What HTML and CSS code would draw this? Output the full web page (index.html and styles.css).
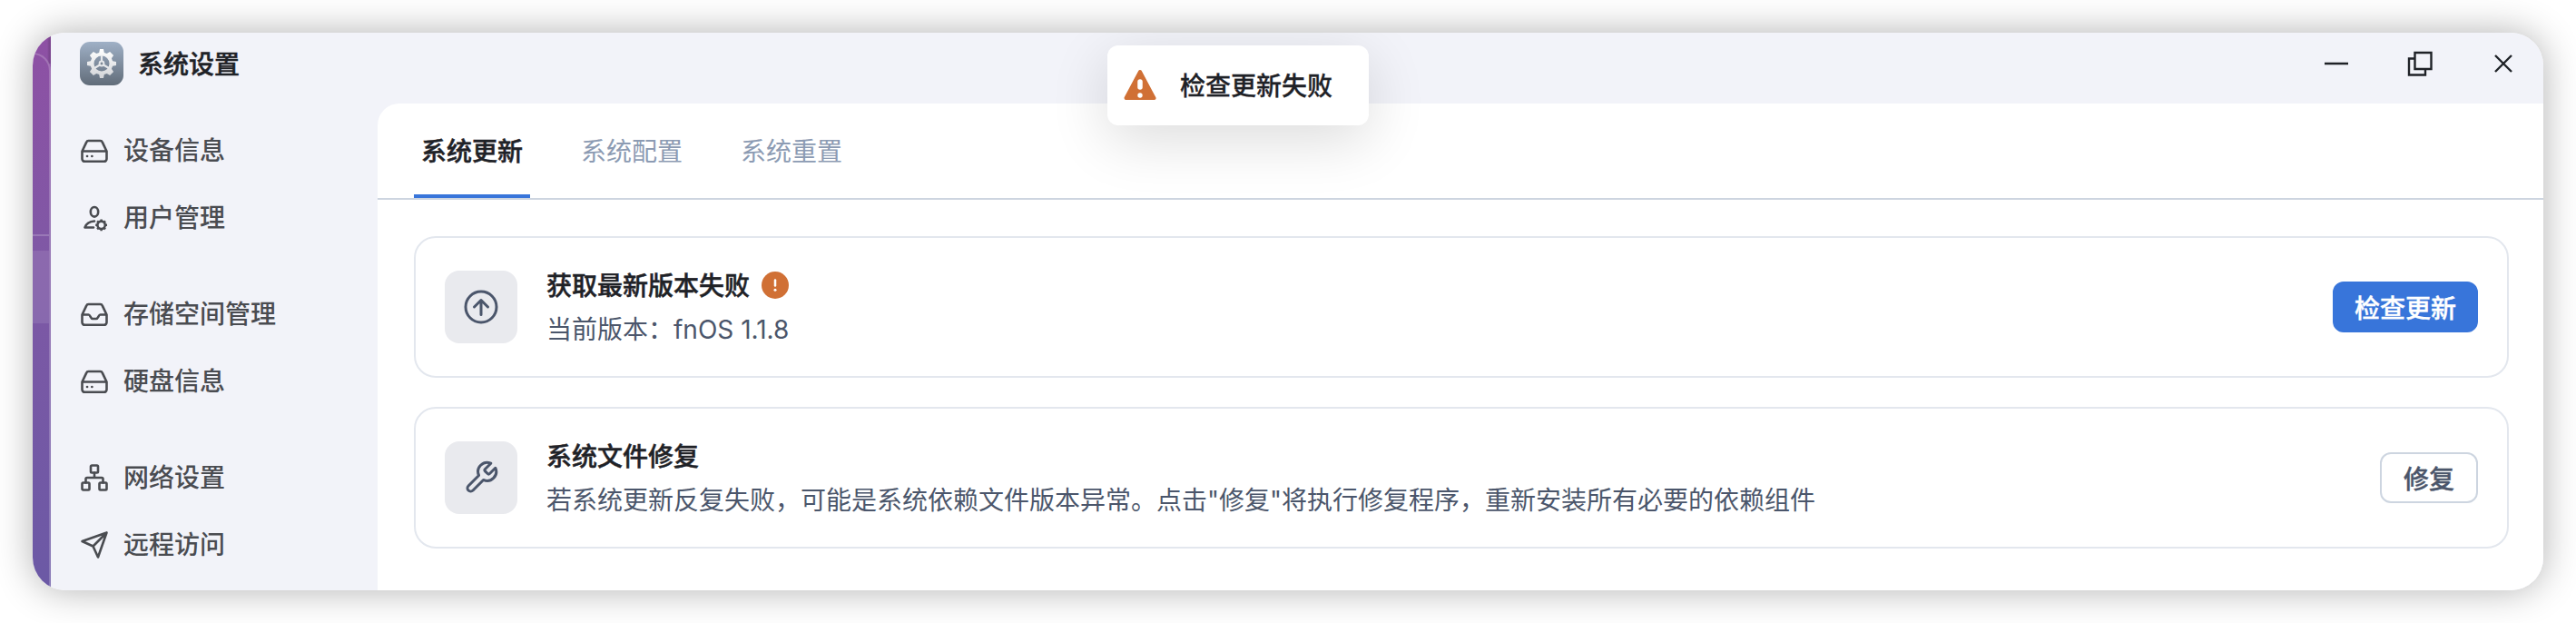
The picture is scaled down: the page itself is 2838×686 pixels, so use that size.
FILE: index.html
```html
<!DOCTYPE html>
<html lang="zh-CN">
<head>
    <meta charset="UTF-8">
    <meta name="viewport" content="width=device-width, initial-scale=1.0">
    <title>系统设置</title>
    <link rel="stylesheet" href="styles.css">
</head>
<body>
    <div class="window">
        <!-- Strip of the desktop left of the app -->
        <div class="desktop">
            <div class="desktop-panel">
                <div class="desktop-head"></div>
                <div class="desktop-row"></div>
            </div>
        </div>

        <div class="app">
            <!-- Title bar -->
            <div class="titlebar">
                <svg class="app-icon" viewBox="0 0 48 48">
                    <defs>
                        <linearGradient id="tile" x1="0" y1="0" x2="0" y2="1">
                            <stop offset="0" stop-color="#9fb0c6"/>
                            <stop offset="1" stop-color="#616c79"/>
                        </linearGradient>
                        <linearGradient id="gear" x1="0" y1="0" x2="0" y2="1">
                            <stop offset="0" stop-color="#ffffff"/>
                            <stop offset="1" stop-color="#d2d4d8"/>
                        </linearGradient>
                    </defs>
                    <rect width="48" height="48" rx="11" fill="url(#tile)"/>
                    <path fill="url(#gear)" fill-rule="evenodd" d="M22 8h4l.8 3.9 2.9 1.2 3.4-2.2 4 4-2.2 3.4 1.2 2.9 3.9.8v4l-3.9.8-1.2 2.9 2.2 3.4-4 4-3.4-2.2-2.9 1.2L26 40h-4l-.8-3.900-2.900-1.200-3.400 2.200-4-4 2.200-3.400-1.200-2.900L8 26v-4l3.900-.8 1.200-2.900-2.200-3.400 4-4 3.400 2.200 2.900-1.200zM24 15.500a8.500 8.500 0 1 0 0 17a8.500 8.500 0 1 0 0-17z"/>
                    <path stroke="#e6e8eb" stroke-width="2.200" fill="none" d="M24 15v7M22 25.500l-6 3.500M26 25.500l6 3.500"/>
                    <circle cx="24" cy="24" r="2.400" stroke="#e6e8eb" stroke-width="2" fill="#7c8896"/>
                </svg>
                <span class="app-name">系统设置</span>
                <div class="controls">
                    <svg viewBox="0 0 32 32"><path d="M3 16h26"/></svg>
                    <svg viewBox="0 0 32 32"><path d="M10.500 4h18v18h-18zM10.500 10.500H4v18h18V22"/></svg>
                    <svg viewBox="0 0 32 32"><path d="M7 7l18 18M25 7L7 25"/></svg>
                </div>
            </div>

            <div class="body">
                <!-- Sidebar -->
                <div class="sidebar">
                    <div class="group">
                        <a class="item">
                            <svg viewBox="0 0 32 32"><path d="M2.500 16.500 7.200 6.600A2.500 2.500 0 0 1 9.500 5h13a2.500 2.500 0 0 1 2.300 1.600l4.700 9.900V25a2.800 2.800 0 0 1-2.800 2.800H5.300A2.800 2.800 0 0 1 2.500 25zM2.500 16.500h27"/><path d="M8 22h.1M13.300 22h.1"/></svg>
                            设备信息
                        </a>
                        <a class="item">
                            <svg viewBox="0 0 32 32"><ellipse cx="16" cy="9.300" rx="4.200" ry="5.300"/><path d="M16 19.500c-6 .3-9 2.800-10.500 7H15"/><circle cx="23.600" cy="23.800" r="4.200"/><path stroke-width="2.400" stroke-linecap="butt" d="M23.600 17.400v2.200M23.600 28v2.200M17.200 23.800h2.200M27.800 23.800H30M19.100 19.300l1.500 1.500M26.600 26.800l1.500 1.500M28.100 19.300l-1.500 1.500M20.600 26.800l-1.500 1.500"/></svg>
                            用户管理
                        </a>
                    </div>
                    <div class="group">
                        <a class="item">
                            <svg viewBox="0 0 32 32"><path d="M2.500 16.500 7.200 6.600A2.500 2.500 0 0 1 9.500 5h13a2.500 2.500 0 0 1 2.300 1.600l4.700 9.900V25a2.800 2.800 0 0 1-2.800 2.800H5.300A2.800 2.800 0 0 1 2.500 25zM2.500 16.500h7c2 0 2.200 4.500 4.500 4.500h4c2.300 0 2.500-4.500 4.500-4.500h7"/></svg>
                            存储空间管理
                        </a>
                        <a class="item">
                            <svg viewBox="0 0 32 32"><path d="M2.500 16.500 7.200 6.600A2.500 2.500 0 0 1 9.500 5h13a2.500 2.500 0 0 1 2.300 1.600l4.700 9.900V25a2.800 2.800 0 0 1-2.800 2.800H5.300A2.800 2.800 0 0 1 2.500 25zM2.500 16.500h27"/><path d="M8 22h.1M13.300 22h.1"/></svg>
                            硬盘信息
                        </a>
                    </div>
                    <div class="group">
                        <a class="item">
                            <svg viewBox="0 0 32 32"><rect x="12" y="2.500" width="8" height="8" rx="1.200"/><rect x="2.500" y="21.500" width="8" height="8" rx="1.200"/><rect x="21.500" y="21.500" width="8" height="8" rx="1.200"/><path d="M16 10.500V16M6.500 21.500v-4a1.500 1.500 0 0 1 1.500-1.500h16a1.500 1.500 0 0 1 1.500 1.500v4"/></svg>
                            网络设置
                        </a>
                        <a class="item">
                            <svg viewBox="0 0 32 32"><path d="M29.500 2.500 2.500 12l12 5.500 5.500 12zM14.500 17.500l15-15"/></svg>
                            远程访问
                        </a>
                    </div>
                </div>

                <!-- Content -->
                <div class="content">
                    <div class="tabs">
                        <div class="tab active">系统更新</div>
                        <div class="tab">系统配置</div>
                        <div class="tab">系统重置</div>
                    </div>

                    <div class="cards">
                        <div class="card">
                            <div class="card-icon">
                                <svg viewBox="0 0 40 40"><circle cx="20" cy="20" r="17"/><path d="M20 28.500V12.500M12.500 20l7.500-7.500 7.500 7.500"/></svg>
                            </div>
                            <div class="card-text">
                                <div class="card-title">
                                    获取最新版本失败
                                    <svg class="badge" viewBox="0 0 30 30"><circle cx="15" cy="15" r="15" fill="#d07035"/><path d="M15 9.500v6" stroke="#fff" stroke-width="2.500" stroke-linecap="round"/><circle cx="15" cy="20.300" r="1.500" fill="#fff"/></svg>
                                </div>
                                <div class="card-desc">当前版本：fnOS 1.1.8</div>
                            </div>
                            <button class="btn primary">检查更新</button>
                        </div>

                        <div class="card">
                            <div class="card-icon">
                                <svg viewBox="0 0 24 24"><path class="wrench" d="M14.700 6.300a1 1 0 0 0 0 1.400l1.600 1.600a1 1 0 0 0 1.400 0l3.770-3.770a6 6 0 0 1-7.940 7.940l-6.910 6.910a2.120 2.120 0 0 1-3-3l6.910-6.910a6 6 0 0 1 7.940-7.940l-3.760 3.760z"/></svg>
                            </div>
                            <div class="card-text">
                                <div class="card-title">系统文件修复</div>
                                <div class="card-desc">若系统更新反复失败，可能是系统依赖文件版本异常。点击"修复"将执行修复程序，重新安装所有必要的依赖组件</div>
                            </div>
                            <button class="btn">修复</button>
                        </div>
                    </div>
                </div>
            </div>
        </div>

        <!-- Toast message -->
        <div class="toast">
            <svg viewBox="0 0 36 36"><path d="M18 3 33.500 32H2.500z" fill="#d07035" stroke="#d07035" stroke-width="4" stroke-linejoin="round"/><path d="M18 14v6" stroke="#fff" stroke-width="5.500" stroke-linecap="round"/><circle cx="18" cy="29" r="2.700" fill="#fff"/></svg>
            <span class="toast-text">检查更新失败</span>
        </div>
    </div>
</body>
</html>
```

FILE: styles.css
```css
* {
    box-sizing: border-box;
}

body {
    margin: 0;
    padding: 36px;
    height: 686px;
    overflow: hidden;
    background-color: #ffffff;
    font-family: Inter, "Noto Sans CJK SC", sans-serif;
    font-size: 28px;
    line-height: 44px;
    color: #1f2227;
}

.window {
    position: relative;
    display: flex;
    height: 614px;
    border-radius: 36px;
    overflow: hidden;
    box-shadow: 0 0 42px rgba(0, 0, 0, 0.31);
}

/* Desktop strip */
.desktop {
    width: 20px;
    padding-top: 22px;
    background: linear-gradient(90deg, transparent 16px, rgba(0, 0, 0, 0.12) 18px) 0 0 / 100% 34px no-repeat,
        linear-gradient(180deg, #8e50a4 0%, #7f58a5 40%, #6b59a5 100%);
}

.desktop-panel {
    height: 592px;
    border-top: 2px solid rgba(255, 255, 255, 0.2);
    border-right: 2px solid rgba(255, 255, 255, 0.2);
    border-top-right-radius: 20px;
}

.desktop-head {
    height: 200px;
    border-bottom: 2px solid rgba(255, 255, 255, 0.2);
}

.desktop-row {
    height: 80px;
    margin-top: 16px;
    background-color: rgba(255, 255, 255, 0.1);
}

.app {
    flex: 1;
    display: flex;
    flex-direction: column;
    background-color: #f2f3f9;
}

/* Title bar */
.titlebar {
    display: flex;
    flex-shrink: 0;
    align-items: center;
    height: 78px;
    padding: 0 28px 10px 32px;
}

.app-icon {
    width: 48px;
    height: 48px;
}

.app-name {
    margin-left: 16px;
    padding-top: 1px;
    font-weight: 500;
    -webkit-text-stroke: 0.5px;
}

.controls {
    display: flex;
    gap: 60px;
    margin-left: auto;
}

.controls svg {
    width: 32px;
    height: 32px;
    fill: none;
    stroke: #1f2227;
    stroke-width: 2.4;
}

.body {
    flex: 1;
    display: flex;
    min-height: 0;
}

/* Sidebar */
.sidebar {
    width: 360px;
    padding: 30px 32px 0;
}

.group {
    display: flex;
    flex-direction: column;
    gap: 30px;
    margin-bottom: 62px;
}

.item {
    display: flex;
    align-items: center;
    gap: 16px;
    font-weight: 500;
    color: #4a4c51;
}

.item svg {
    width: 32px;
    height: 32px;
    fill: none;
    stroke: #4a4c51;
    stroke-width: 2.6;
    stroke-linecap: round;
    stroke-linejoin: round;
}

/* Content */
.content {
    flex: 1;
    background-color: #ffffff;
    border-top-left-radius: 24px;
}

.tabs {
    display: flex;
    gap: 48px;
    height: 106px;
    padding: 0 40px;
    border-bottom: 2px solid #cdd5e0;
}

.tab {
    padding: 31px 8px 0;
    color: #8c9bb3;
}

.tab.active {
    font-weight: 500;
    color: #1f2227;
    border-bottom: 4px solid #3875da;
    -webkit-text-stroke: 0.5px;
}

.cards {
    display: flex;
    flex-direction: column;
    gap: 32px;
    padding: 40px 38px 0 40px;
}

.card {
    display: flex;
    align-items: center;
    height: 156px;
    padding: 0 32px;
    border: 2px solid #e3e7ee;
    border-radius: 24px;
}

.card-icon {
    display: flex;
    align-items: center;
    justify-content: center;
    width: 80px;
    height: 80px;
    margin-right: 32px;
    background-color: #e9eaee;
    border-radius: 16px;
}

.card-icon svg {
    width: 40px;
    height: 40px;
    fill: none;
    stroke: #4b566b;
    stroke-width: 3;
    stroke-linecap: round;
    stroke-linejoin: round;
}

.card-icon .wrench {
    stroke-width: 1.8;
}

.card-text {
    flex: 1;
    padding-top: 2px;
}

.card-title {
    display: flex;
    align-items: center;
    gap: 13px;
    margin-bottom: 4px;
    font-weight: 500;
    -webkit-text-stroke: 0.5px;
}

.badge {
    width: 30px;
    height: 30px;
    margin-top: -2px;
}

.card-desc {
    color: #4b566b;
}

.btn {
    height: 56px;
    padding: 0 24px;
    font-family: inherit;
    font-size: 28px;
    font-weight: 500;
    color: #4b566b;
    background-color: #ffffff;
    border: 2px solid #cdd5e0;
    border-radius: 12px;
    -webkit-text-stroke: 0.4px;
}

.btn.primary {
    padding: 0 22px;
    color: #ffffff;
    background-color: #3875da;
    border-color: #3875da;
}

/* Toast */
.toast {
    position: absolute;
    top: 14px;
    left: 1184px;
    display: flex;
    align-items: center;
    gap: 26px;
    width: 288px;
    height: 88px;
    padding-left: 18px;
    font-weight: 500;
    background-color: #ffffff;
    border-radius: 12px;
    box-shadow: 0 16px 64px rgba(0, 0, 0, 0.14);
}

.toast svg {
    width: 36px;
    height: 36px;
}

.toast-text {
    padding-top: 2px;
    -webkit-text-stroke: 0.3px;
}
```
